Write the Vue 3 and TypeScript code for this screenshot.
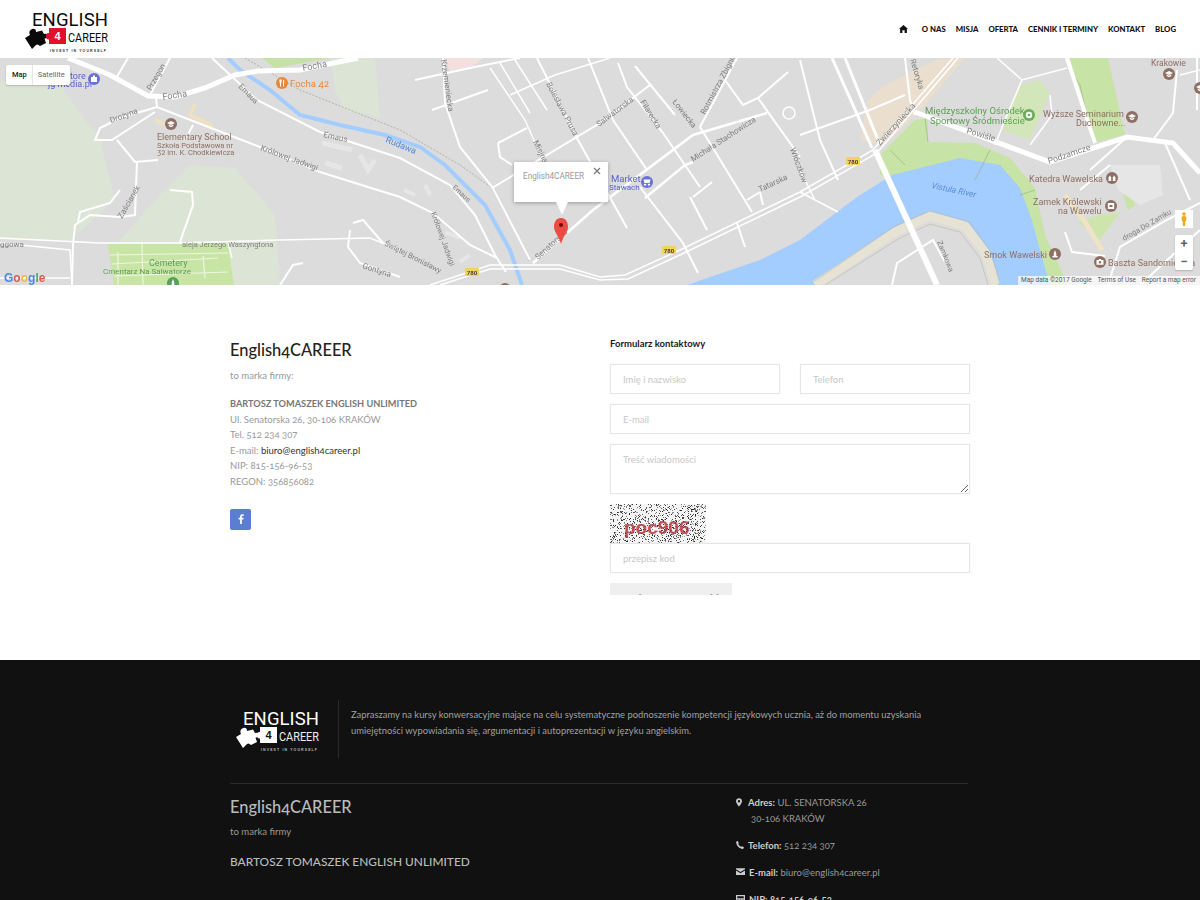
<script setup lang="ts">
interface Road { d: string; w: number }
interface Label { x: number; y: number; t: string; r?: number; c?: string; s?: number; i?: boolean }
interface Poi { x: number; y: number; c: string; g: string }

const G = '#7f7f7f'
const BR = '#8f6f63'
const GR = '#5c9e52'
const BL = '#5b62cf'

const CAP = 'M0,-3 L4,-1 L0,1 L-4,-1 Z M-2.300,0.500 L0,1.800 L2.300,0.500 L2.300,2 L0,3.200 L-2.300,2 Z'
const FORK = 'M-2.600,-3.500 L-2.600,-0.800 L-2,0 L-2,3.500 L-1,3.500 L-1,0 L-0.400,-0.800 L-0.400,-3.500 Z M1,-3.500 C2.600,-3 2.600,-0.500 2,0 L2,3.500 L1,3.500 Z'
const CART = 'M-3.500,-2.500 L3.500,-2.500 L2.500,1 L-2.500,1 Z M-2,1.800 A0.900,0.900 0 1 1 -2,3.500 A0.900,0.900 0 1 1 -2,1.800 Z M2,1.800 A0.900,0.900 0 1 1 2,3.500 A0.900,0.900 0 1 1 2,1.800 Z'
const BAG = 'M-3,-2 L3,-2 L3,3 L-3,3 Z M-1,-3.500 L1,-3.500 L1,-2 L-1,-2 Z'
const RING = 'M0,-3.200 A3.200,3.200 0 1 1 0,3.200 A3.200,3.200 0 1 1 0,-3.200 Z M0,-1.300 A1.300,1.300 0 1 0 0,1.300 A1.300,1.300 0 1 0 0,-1.300 Z'
const CHURCH = 'M-3.500,3 L-3.500,-0.500 L-2,-2.500 L-0.800,-0.500 L-0.800,3 Z M0.800,3 L0.800,-0.500 L2,-2.500 L3.500,-0.500 L3.500,3 Z'
const MUSEUM = 'M-3.200,-3 L3.200,-3 L3.200,3 L-3.200,3 Z M-1.500,-1 L-1.500,1 L1.500,1 L1.500,-1 Z'
const STATUE = 'M0,-4 L1.300,-0.500 L1.300,2 L2.600,2 L2.600,3.500 L-2.600,3.500 L-2.600,2 L-1.300,2 L-1.300,-0.500 Z'
const CAMERA = 'M-3.500,-2 L-1.500,-2 L-0.800,-3 L0.800,-3 L1.500,-2 L3.500,-2 L3.500,2.800 L-3.500,2.800 Z M0,-1 A1.300,1.300 0 1 0 0,1.600 A1.300,1.300 0 1 0 0,-1 Z'

const PUZZLE = 'M1,33 L6,30 Q4,26 8,24 Q12,23 12,27 L18,25.500 L20,29 Q23,28 23.500,31 Q23,34 20.500,33.500 L22,38 L16,41 Q13,38 11,41 L8,44 Z'
const BOX = 'M25,23 L42,23 L42,39 L25,39 L25,34.500 Q22,35 22,31 Q22,27.500 25,28 Z'

const roads: Road[] = [
  { d: 'M68,58 L110,75 L148,96 L175,97 L205,88 L235,75 L258,71 L300,70 L358,58', w: 5 },
  { d: 'M915,112 L1050,162 L1127,137 L1173,143 L1200,173', w: 5 },
  { d: 'M1067,58 L1095,143', w: 4 },
  { d: 'M157,107 L260,147 L320,172 L400,197 L433,213 L470,245 L497,258', w: 2 },
  { d: 'M212,58 L257,100 L320,132 L400,158 L450,185 L475,215 L495,255 L506,272', w: 2 },
  { d: 'M157,107 L120,118 L100,128 L95,140 L112,140 L155,112', w: 2 },
  { d: 'M157,107 L156,98 M150,95 L170,58 M115,80 L128,58', w: 2 },
  { d: 'M117,140 L135,162 L158,160 M137,162 L135,215 L120,217 L90,215 L75,225 L73,245 L72,285', w: 2 },
  { d: 'M78,222 L80,212 L110,203 L120,190 M170,190 L192,192 L193,205 L180,242', w: 2 },
  { d: 'M0,238 L100,243 L180,243 L280,240 L370,238 L400,250', w: 1.5 },
  { d: 'M0,243 L70,250 L72,285 M228,242 L232,258 M0,278 L70,278', w: 1.5 },
  { d: 'M353,223 L363,220 L383,243 M350,230 L348,247 L360,263 L400,277 M280,285 L293,265 L303,263', w: 2 },
  { d: 'M193,125 L185,140 M415,80 L470,68 L520,58 M432,110 L488,90', w: 2 },
  { d: 'M443,58 L445,103 L460,147 L493,188 L530,260', w: 2 },
  { d: 'M490,68 L525,120 L545,165 M500,63 L530,113 M515,60 L547,110 M510,95 L555,75 L610,58', w: 1.5 },
  { d: 'M537,58 L578,140 L627,228 M492,188 L600,123 L650,85 M498,143 L527,128 M498,143 L500,157 L512,165', w: 2 },
  { d: 'M588,58 L613,120 L647,170 M618,63 L627,87 L663,133 L700,187 M635,66 L675,115', w: 2 },
  { d: 'M533,263 L593,210 L693,135 L767,113 M645,198 L685,165 L693,162', w: 2.5 },
  { d: 'M700,127 L752,212 M693,197 L712,182 M690,197 L707,230 M640,187 L683,243 L698,273', w: 2 },
  { d: 'M700,127 L737,58 M725,80 L743,105 L758,98 L788,72 M758,98 L800,157', w: 2 },
  { d: 'M747,200 L760,192 M737,223 L745,247 M760,192 L763,205', w: 2 },
  { d: 'M800,60 L820,140 L838,180 M800,135 L870,110 L905,95 M905,58 L910,100 L915,115', w: 2 },
  { d: 'M997,58 L1022,80 L1067,68 M1022,80 L1005,120 L995,145 M1050,95 L1052,115 L1030,145', w: 1.5 },
  { d: 'M1177,70 L1173,113 L1153,140 M1127,137 L1090,170 M1197,58 L1197,110', w: 2 },
  { d: 'M1108,285 L1120,247 L1167,220 L1200,203 M1140,285 L1200,230 M892,285 L897,263 L933,240 L945,262', w: 2 },
  { d: 'M1065,232 L1072,252 L1105,256 M1165,143 L1190,200 M1080,190 L1110,165', w: 2 },
  { d: 'M800,192 L838,212 M800,170 L815,200 M1200,70 L1180,75', w: 1.5 },
  { d: 'M430,285 L490,265 L560,265 L600,277 L625,275 L680,250 L800,192 L873,150 L953,58', w: 1.5 },
  { d: 'M440,285 L490,269 L560,269 L600,280 L628,279 L682,254 L802,196 L877,153 L958,58', w: 1.5 },
  { d: 'M832,58 L872,148 M845,58 L880,145', w: 3 },
  { d: 'M875,150 L937,285', w: 6 }
]

const labels: Label[] = [
  { x: 163, y: 100, t: 'Focha', r: -9 }, { x: 303, y: 71, t: 'Focha', r: -10 },
  { x: 151, y: 91, t: 'Przegon', r: -60, s: 8 }, { x: 111, y: 123, t: 'Drożyna', r: -20, s: 8 },
  { x: 238, y: 87, t: 'Emaus', r: 45, s: 8 }, { x: 323, y: 137, t: 'Emaus', r: 12, s: 8 },
  { x: 385, y: 142, t: 'Rudawa', r: 22, c: '#4f86d6', s: 9 },
  { x: 260, y: 150, t: 'Królowej Jadwigi', r: 20, s: 8 }, { x: 122, y: 219, t: 'Zaścianek', r: -60, s: 8 },
  { x: 182, y: 247, t: 'aleja Jerzego Waszyngtona', s: 7.5 }, { x: 0, y: 247, t: 'ggowa', s: 8 },
  { x: 384, y: 245, t: 'Świętej Bronisławy', r: 27, s: 7.5 }, { x: 362, y: 268, t: 'Gontyna', r: 18, s: 8 },
  { x: 157, y: 140, t: 'Elementary School', c: BR, s: 9 },
  { x: 157, y: 148, t: 'Szkoła Podstawowa nr', c: BR, s: 7.5 }, { x: 157, y: 155, t: '32 im. K. Chodkiewicza', c: BR, s: 7.5 },
  { x: 290, y: 87, t: 'Focha 42', c: '#e5893c', s: 9.5 }, { x: 70, y: 79, t: 'tore', c: BL, s: 9 }, { x: 48, y: 87, t: 'jg media.pl', c: BL, s: 9 },
  { x: 149, y: 266, t: 'Cemetery', c: GR, s: 9 }, { x: 103, y: 274, t: 'Cmentarz Na Salwatorze', c: GR, s: 8 },
  { x: 441, y: 60, t: 'Krzemieniecka', r: 82, s: 8 },
  { x: 546, y: 84, t: 'Bolesława Prusa', r: 62, s: 8 }, { x: 599, y: 127, t: 'Salwatorska', r: -37, s: 8 },
  { x: 640, y: 102, t: 'Filarecka', r: 58, s: 8 }, { x: 672, y: 102, t: 'Łowiecka', r: 52, s: 8 },
  { x: 705, y: 115, t: 'Rotmistrza Zbigniewa', r: -62, s: 8 }, { x: 693, y: 162, t: 'Michała Stachowicza', r: -33, s: 8 },
  { x: 790, y: 149, t: 'Włóczków', r: 70, s: 8 }, { x: 760, y: 192, t: 'Tatarska', r: -25, s: 8 },
  { x: 533, y: 142, t: 'Misjna', r: 64, s: 8 }, { x: 538, y: 260, t: 'Senatorska', r: -42, s: 8 },
  { x: 452, y: 188, t: 'Emaus', r: 42, s: 7 }, { x: 431, y: 213, t: 'Królowej Jadwigi', r: 70, s: 7.5 },
  { x: 611, y: 182, t: 'Market', c: BL, s: 9.5 }, { x: 609, y: 190, t: 'Stawach', c: BL, s: 8 },
  { x: 880, y: 146, t: 'Zwierzyniecka', r: -48, s: 8.5 }, { x: 910, y: 60, t: 'Retoryka', r: 73, s: 8 },
  { x: 966, y: 133, t: 'Powiśle', r: 17, s: 8.5 }, { x: 1049, y: 164, t: 'Podzamcze', r: -19, s: 8.5 },
  { x: 925, y: 114, t: 'Międzyszkolny Ośrodek', c: GR, s: 9.5 }, { x: 930, y: 124, t: 'Sportowy Śródmieście', c: GR, s: 9.5 },
  { x: 1043, y: 117, t: 'Wyższe Seminarium', c: BR, s: 9 }, { x: 1076, y: 126, t: 'Duchowne...', c: BR, s: 9 },
  { x: 1029, y: 182, t: 'Katedra Wawelska', c: BR, s: 9 }, { x: 1033, y: 205, t: 'Zamek Królewski', c: BR, s: 9 },
  { x: 1058, y: 214, t: 'na Wawelu', c: BR, s: 9 }, { x: 984, y: 258, t: 'Smok Wawelski', c: BR, s: 9 },
  { x: 1108, y: 266, t: 'Baszta Sandomierska', c: BR, s: 9 }, { x: 1151, y: 66, t: 'Krakowie', c: BR, s: 8.5 },
  { x: 931, y: 188, t: 'Vistula River', r: 12, c: '#5f8fd6', s: 8.5, i: true },
  { x: 937, y: 242, t: 'Zamkowa', r: 68, s: 7.5 }, { x: 1124, y: 241, t: 'droga Do Zamku', r: -30, s: 7.5 }
]

const pois: Poi[] = [
  { x: 171, y: 124, c: BR, g: CAP }, { x: 282, y: 83, c: '#e8873a', g: FORK }, { x: 94, y: 79, c: '#6a70d8', g: BAG },
  { x: 173, y: 283, c: '#57a05a', g: STATUE }, { x: 647, y: 182, c: '#6a70d8', g: CART }, { x: 505, y: 289, c: BR, g: CAP },
  { x: 1029, y: 115, c: '#6cab5c', g: RING }, { x: 1132, y: 117, c: BR, g: CAP }, { x: 1112, y: 178, c: BR, g: CHURCH },
  { x: 1111, y: 206, c: BR, g: MUSEUM }, { x: 1055, y: 254, c: BR, g: STATUE }, { x: 1100, y: 262, c: BR, g: CAMERA },
  { x: 1169, y: 74, c: BR, g: CAP }, { x: 1200, y: 88, c: BR, g: CAP }
]

const badges = [{ x: 669, y: 250 }, { x: 472, y: 272 }, { x: 853, y: 161 }]

let seed = 7
const rnd = (): number => {
  seed = (seed * 16807) % 2147483647
  return seed / 2147483647
}
const noise = Array.from({ length: 900 }, () => ({
  x: Math.floor(rnd() * 96),
  y: Math.floor(rnd() * 39),
  o: 0.35 + rnd() * 0.65
}))
</script>

<template>
  <div class="page">
    <header class="top">
      <svg class="logo" viewBox="0 0 90 48" width="90" height="48">
        <path :d="PUZZLE" fill="#0a0a0a" />
        <path :d="BOX" fill="#e0112b" />
        <text class="l-four" x="33.500" y="35" fill="#fff">4</text>
        <text class="l-main" x="8" y="21" textLength="76" fill="#0a0a0a">ENGLISH</text>
        <text class="l-sub" x="44" y="36.500" textLength="40" lengthAdjust="spacingAndGlyphs" fill="#0a0a0a">CAREER</text>
        <text class="l-tag" x="26" y="47" textLength="56" fill="#333">INVEST IN YOURSELF</text>
      </svg>
      <nav class="nav">
        <svg class="home" viewBox="0 0 16 14" width="9" height="8"><path d="M8,0 L16,7 L14,7 L14,14 L10,14 L10,9 L6,9 L6,14 L2,14 L2,7 L0,7 Z" fill="#111" /></svg>
        <a>O NAS</a><a>MISJA</a><a>OFERTA</a><a>CENNIK I TERMINY</a><a>KONTAKT</a><a>BLOG</a>
      </nav>
    </header>

    <section class="map">
      <svg class="map-svg" viewBox="0 58 1200 227" width="1200" height="227">
        <rect x="0" y="58" width="1200" height="227" fill="#dcdcdc" />
        <path d="M0,82 L60,85 L100,140 L115,200 L70,240 L0,240 Z" fill="#dce5d5" />
        <path d="M120,240 L160,195 L190,165 L235,168 L275,215 L280,285 L120,285 Z" fill="#dce5d5" />
        <path d="M330,58 L375,58 L380,118 L345,110 L335,90 Z" fill="#dce5d5" />
        <path d="M262,58 L330,58 L275,68 Z" fill="#c5e1a5" />
        <path d="M108,244 L228,244 L234,285 L114,285 Z" fill="#c9e5a6" />
        <path d="M860,140 L868,100 L885,85 L935,60 L965,58 L925,105 L885,145 Z" fill="#eadfcf" />
        <path d="M445,58 L484,58 L470,68 L450,72 Z" fill="#f3dfe0" />
        <path d="M1070,58 L1108,58 L1125,135 L1093,143 Z" fill="#c8e3a6" />
        <path d="M1003,130 L1020,85 L1040,80 L1050,93 L1030,140 Z" fill="#d3e6b9" />
        <path d="M1078,222 L1100,215 L1120,212 L1100,240 Z" fill="#cde5ac" />
        <path d="M1123,195 L1131,192 L1135,206 L1128,210 Z" fill="#c8e3a6" />
        <path d="M1110,165 L1160,165 L1163,195 L1140,205 L1118,190 Z" fill="#e6e6e6" />
        <path d="M880,155 L915,120 L928,118 L928,142 L975,143 L1010,158 L1035,188 L1045,235 L1068,285 L1045,285 L960,190 L880,175 Z" fill="#c8e3a6" />
        <path d="M800,240 L857,197 L892,175 L960,158 L1000,165 L1020,188 L1032,220 L1040,250 L1050,285 L998,285 L985,250 L965,225 L925,215 L895,230 L840,268 L815,285 L687,285 L760,260 Z" fill="#a3ccff" />
        <path d="M815,285 L895,232 L930,216 L965,226 L985,252 L996,285" fill="none" stroke="#e6e3d4" stroke-width="9" />
        <path d="M812,283 L895,226 L930,211 L970,222 L992,254 L1000,285 M825,285 L900,238 L930,224 L960,232 L980,258 L988,285" fill="none" stroke="#bcb6a8" stroke-width="0.600" />
        <path d="M925,118 L928,142 M890,150 L905,165 M990,150 L975,180 M1035,190 L1020,195 M1093,143 L1080,85 L1070,70" fill="none" stroke="#8fb07a" stroke-width="0.600" />
        <path d="M228,58 L240,70 L270,90 L300,115 L340,125 L385,135 L420,147 L445,165 L485,205 L510,250 L522,285" fill="none" stroke="#a3ccff" stroke-width="4" />
        <path d="M245,58 L300,90 L400,130 L460,165 L495,190 L520,240 L530,262" fill="none" stroke="#b8b09c" stroke-width="1" stroke-dasharray="2 1.500" />
        <path d="M195,104 L190,115 L213,126 M155,120 L168,126" fill="none" stroke="#eee0c0" stroke-width="4" />
        <path d="M322,143 L352,150 M325,163 L342,168 M360,155 L368,170 L375,160" fill="none" stroke="#e6e6e6" stroke-width="5" />
        <path d="M404,190 L415,195 M425,185 L430,195 M445,232 L460,238 M460,262 L470,255" fill="none" stroke="#e6e6e6" stroke-width="4" />
        <path d="M110,255 L228,253 M112,264 L218,258 M114,276 L228,272 M142,244 L143,285 M203,256 L205,278 M118,252 L118,285" fill="none" stroke="#eef5e2" stroke-width="1.200" />
        <path d="M1065,195 L1085,222 L1102,250" fill="none" stroke="#efe3c5" stroke-width="5" />
        <path v-for="(r, i) in roads" :key="'r' + i" :d="r.d" fill="none" stroke="#fff" :stroke-width="r.w" />
        <circle cx="789" cy="113" r="6" fill="none" stroke="#fff" stroke-width="1.500" />
        <g v-for="(b, i) in badges" :key="'b' + i">
          <rect :x="b.x - 7" :y="b.y - 4" width="14" height="8" rx="1" fill="#f3d35c" />
          <text class="badge" :x="b.x" :y="b.y + 2.500" text-anchor="middle">780</text>
        </g>
        <text v-for="(l, i) in labels" :key="'l' + i" class="lbl" :class="{ it: l.i }" :x="l.x" :y="l.y" :font-size="l.s ?? 9" :fill="l.c ?? G" :transform="l.r ? `rotate(${l.r} ${l.x} ${l.y})` : undefined">{{ l.t }}</text>
        <g v-for="(p, i) in pois" :key="'p' + i" :transform="`translate(${p.x} ${p.y})`">
          <circle r="6" :fill="p.c" />
          <path :d="p.g" fill="#fff" fill-rule="evenodd" />
        </g>
        <text class="goog" x="4" y="282"><tspan fill="#4d86e8">G</tspan><tspan fill="#e0594b">o</tspan><tspan fill="#f0b93a">o</tspan><tspan fill="#4d86e8">g</tspan><tspan fill="#4cab5c">l</tspan><tspan fill="#e0594b">e</tspan></text>
        <path d="M561,218 C555,218 554,224 554,227 C554,232 559,236 561,244 C563,236 568,232 568,227 C568,224 567,218 561,218 Z" fill="#ea4c43" />
        <circle cx="561" cy="225" r="2" fill="#6b0d0b" />
      </svg>

      <div class="maptype"><b>Map</b><span>Satellite</span></div>

      <div class="bubble">
        <span>English4CAREER</span>
        <svg class="x" viewBox="0 0 8 8" width="8" height="8"><path d="M1,1 L7,7 M7,1 L1,7" stroke="#777" stroke-width="1.200" /></svg>
        <i class="tail"></i>
      </div>

      <div class="peg">
        <svg viewBox="0 0 10 20" width="8" height="14"><circle cx="5" cy="3" r="2.600" fill="#f0a81c" /><path d="M1.500,7 Q5,4.500 8.500,7 L8,13 L7,13 L6.500,20 L3.500,20 L3,13 L2,13 Z" fill="#f0a81c" /></svg>
      </div>
      <div class="zoom"><span>+</span><span>−</span></div>
      <div class="attrib"><span>Map data ©2017 Google</span><span>Terms of Use</span><span>Report a map error</span></div>
    </section>

    <main class="contact">
      <div class="info">
        <h3>English4CAREER</h3>
        <p class="lead">to marka firmy:</p>
        <p class="lines">
          <strong>BARTOSZ TOMASZEK ENGLISH UNLIMITED</strong><br />
          Ul. Senatorska 26, 30-106 KRAKÓW<br />
          Tel. 512 234 307<br />
          E-mail: <a>biuro@english4career.pl</a><br />
          NIP: 815-156-96-53<br />
          REGON: 356856082
        </p>
        <div class="fb">
          <svg viewBox="0 0 10 18" width="6" height="10"><path d="M6.500,18 L6.500,10 L9.200,10 L9.600,6.900 L6.500,6.900 L6.500,4.900 C6.500,4 6.800,3.400 8.100,3.400 L9.700,3.400 L9.700,0.600 C9.400,0.600 8.500,0.500 7.400,0.500 C5,0.500 3.400,1.900 3.400,4.600 L3.400,6.900 L0.700,6.900 L0.700,10 L3.400,10 L3.400,18 Z" fill="#fff" /></svg>
        </div>
      </div>
      <form class="form">
        <h4>Formularz kontaktowy</h4>
        <div class="two">
          <input placeholder="Imię i nazwisko" />
          <input placeholder="Telefon" />
        </div>
        <input placeholder="E-mail" />
        <textarea placeholder="Treść wiadomości"></textarea>
        <div class="captcha-block">
          <svg class="captcha" viewBox="0 0 96 39" width="96" height="39">
            <rect width="96" height="39" fill="#f4f4f4" />
            <rect v-for="(n, i) in noise" :key="i" :x="n.x" :y="n.y" width="1" height="1" fill="#222" :opacity="n.o" />
            <text x="14" y="30" class="cap-text">poc906</text>
          </svg>
          <input class="code" placeholder="przepisz kod" />
        </div>
        <div class="btn-clip"><button type="button">WYŚLIJ WIADOMOŚĆ</button></div>
      </form>
    </main>

    <footer class="foot">
      <div class="foot-inner">
        <div class="foot-top">
          <svg class="logo" viewBox="0 0 90 48" width="90" height="48">
            <path :d="PUZZLE" fill="#fff" />
            <path :d="BOX" fill="#fff" />
            <text class="l-four" x="33.500" y="35" fill="#111">4</text>
            <text class="l-main" x="8" y="21" textLength="76" fill="#fff">ENGLISH</text>
            <text class="l-sub" x="44" y="36.500" textLength="40" lengthAdjust="spacingAndGlyphs" fill="#eee">CAREER</text>
            <text class="l-tag" x="26" y="47" textLength="56" fill="#bbb">INVEST IN YOURSELF</text>
          </svg>
          <p>Zapraszamy na kursy konwersacyjne mające na celu systematyczne podnoszenie kompetencji językowych ucznia, aż do momentu uzyskania<br />umiejętności wypowiadania się, argumentacji i autoprezentacji w języku angielskim.</p>
        </div>
        <div class="foot-bottom">
          <div class="foot-left">
            <h3>English4CAREER</h3>
            <p class="lead">to marka firmy</p>
            <p class="company">BARTOSZ TOMASZEK ENGLISH UNLIMITED</p>
          </div>
          <ul class="foot-right">
            <li>
              <svg viewBox="0 0 10 14" width="6" height="9"><path fill-rule="evenodd" d="M5,0 C2,0 0,2.200 0,5 C0,8 5,14 5,14 C5,14 10,8 10,5 C10,2.200 8,0 5,0 Z M5,3 A2,2 0 1 1 5,7 A2,2 0 1 1 5,3 Z" fill="#ccc" /></svg>
              <span class="g6"><b>Adres:</b> UL. SENATORSKA 26<br /><em>30-106 KRAKÓW</em></span>
            </li>
            <li>
              <svg viewBox="0 0 14 14" width="8" height="8"><path d="M3,0 L5,3.500 L3.800,5 C4.500,7 6.500,9.300 9,10.200 L10.500,9 L14,11 L12.500,13.800 C7,14.500 0,8 0.200,1.500 Z" fill="#ccc" /></svg>
              <span class="g3"><b>Telefon:</b> 512 234 307</span>
            </li>
            <li>
              <svg viewBox="0 0 16 12" width="9" height="7"><path d="M0,0 L16,0 L16,2 L8,7 L0,2 Z M0,4 L8,9 L16,4 L16,12 L0,12 Z" fill="#ccc" /></svg>
              <span class="g4"><b>E-mail:</b> biuro@english4career.pl</span>
            </li>
            <li>
              <svg viewBox="0 0 14 14" width="9" height="9"><path fill-rule="evenodd" d="M0,0 L14,0 L14,14 L0,14 Z M2,2 L2,5 L12,5 L12,2 Z M2,7 L2,9 L4,9 L4,7 Z M6,7 L6,9 L8,9 L8,7 Z M10,7 L10,9 L12,9 L12,7 Z" fill="#ccc" /></svg>
              <span class="g4"><b>NIP:</b> <b>815-156-96-53</b></span>
            </li>
          </ul>
        </div>
      </div>
    </footer>
  </div>
</template>

<style scoped>
.page {
  width: 1200px;
  height: 900px;
  overflow: hidden;
  background: #fff;
  font-family: Lato, "Open Sans", sans-serif;
  font-variant-numeric: oldstyle-nums;
  color: #999;
}
.top {
  height: 58px;
  display: flex;
  align-items: center;
  justify-content: space-between;
  padding: 0 24px;
  box-sizing: border-box;
}
.logo { display: block; flex: none; }
.l-main { font: 400 18.500px "Liberation Sans Narrow", Roboto, sans-serif; }
.l-sub { font: 400 13.500px "Liberation Sans Narrow", Roboto, sans-serif; }
.l-four { font: 700 11px "Liberation Sans", sans-serif; text-anchor: middle; }
.l-tag { font: 700 3.500px "Liberation Sans", sans-serif; }
.nav {
  display: flex;
  align-items: center;
  gap: 10px;
  font-size: 7.750px;
  font-weight: 900;
  color: #111;
  margin-top: -1px;
}
.home { margin-right: 4px; }
.map { position: relative; height: 227px; overflow: hidden; }
.map-svg { display: block; filter: blur(0.3px); }
.lbl { font-family: Roboto, sans-serif; }
.it { font-style: italic; }
.badge { font: 700 6px Roboto, sans-serif; fill: #444; }
.goog { font: 700 12px "Liberation Sans", sans-serif; }
.maptype {
  position: absolute;
  left: 6px;
  top: 7px;
  height: 20px;
  display: flex;
  align-items: center;
  background: #fff;
  border-radius: 2px;
  box-shadow: 0 1px 2px rgba(0, 0, 0, 0.2);
  font: 7.500px/20px Roboto, sans-serif;
}
.maptype b { padding: 0 5px 0 6px; color: #222; font-weight: 500; border-right: 1px solid #e6e6e6; }
.maptype span { padding: 0 5px; color: #666; }
.bubble {
  position: absolute;
  left: 514px;
  top: 104px;
  width: 94px;
  height: 40px;
  box-sizing: border-box;
  padding: 9px 9px;
  background: #fff;
  box-shadow: 0 1px 4px rgba(0, 0, 0, 0.3);
  font: 8.200px/10px Roboto, sans-serif;
  color: #999;
}
.x { position: absolute; right: 7px; top: 5px; }
.tail {
  position: absolute;
  left: 42px;
  top: 40px;
  border-left: 6px solid transparent;
  border-right: 6px solid transparent;
  border-top: 13px solid #fff;
}
.peg {
  position: absolute;
  left: 1175px;
  top: 152px;
  width: 18px;
  height: 18px;
  background: #fff;
  display: flex;
  align-items: center;
  justify-content: center;
}
.zoom {
  position: absolute;
  left: 1175px;
  top: 177px;
  width: 18px;
  height: 35px;
  background: #fff;
  border-radius: 2px;
  box-shadow: 0 1px 2px rgba(0, 0, 0, 0.2);
  display: flex;
  flex-direction: column;
  font: 700 13px/17.500px Roboto, sans-serif;
  color: #666;
  text-align: center;
}
.attrib {
  position: absolute;
  right: 0;
  bottom: 0;
  width: 182px;
  height: 9px;
  box-sizing: border-box;
  padding: 0 4px 0 3px;
  background: rgba(255, 255, 255, 0.7);
  display: flex;
  justify-content: space-between;
  font: 6.500px/9px Roboto, sans-serif;
  color: #555;
}
.contact {
  width: 740px;
  height: 375px;
  margin: 0 auto;
  display: grid;
  grid-template-columns: 380px 360px;
  box-sizing: border-box;
  padding-top: 50px;
  font-size: 10px;
}
h3 {
  margin: 0;
  font-size: 16.400px;
  line-height: 28px;
  font-weight: 500;
  color: #222;
}
.info { padding-top: 1px; }
.lead { margin: 4px 0 0; font-size: 9.600px; line-height: 16px; }
.lines { margin: 12px 0 0; line-height: 15.600px; font-size: 9.500px; }
.lines strong { color: #777; font-weight: 700; font-size: 9.200px; }
.lines a { color: #333; }
.fb {
  margin-top: 19px;
  width: 21px;
  height: 21px;
  border-radius: 2px;
  background: #5a7fd1;
  display: flex;
  align-items: center;
  justify-content: center;
}
.form { display: flex; flex-direction: column; gap: 10px; height: 310px; }
.form h4 { margin: 3px 0 4px; font-size: 9.500px; line-height: 12px; font-weight: 700; color: #1a1a1a; }
.two { display: flex; gap: 20px; }
.two input { flex: 1; min-width: 0; }
input, textarea {
  display: block;
  box-sizing: border-box;
  height: 30px;
  width: 100%;
  border: 1px solid #e6e6e6;
  box-shadow: 0 0 1px #eee;
  padding: 0 12px;
  font: 9.500px Lato, sans-serif;
  background: #fff;
  outline: none;
  border-radius: 0;
}
textarea { height: 50px; padding: 9px 12px; }
input::placeholder, textarea::placeholder { color: #c8c8c8; opacity: 1; }
.captcha-block { display: flex; flex-direction: column; align-items: flex-start; }
.captcha { display: block; }
.cap-text { font: 700 19px "Liberation Sans", sans-serif; fill: #b9343f; fill-opacity: 0.85; }
.btn-clip { height: 12px; overflow: hidden; }
button {
  width: 122px;
  height: 30px;
  border: 0;
  background: #efefef;
  font: 700 8px/12px Lato, sans-serif;
  letter-spacing: 1px;
  color: #666;
  padding: 0;
}
.foot { background: #111; height: 240px; color: #999; }
.foot-inner { width: 738px; margin-left: 230px; }
.foot-top {
  height: 124px;
  display: flex;
  align-items: flex-start;
  border-bottom: 1px solid #2c2c2c;
  box-sizing: border-box;
  padding-top: 40px;
}
.foot-top .logo { margin: 4px 0 0 5px; }
.foot-top p {
  margin: 0 0 0 13px;
  height: 58px;
  padding: 7px 0 0 12px;
  box-sizing: border-box;
  border-left: 1px solid #2a2a2a;
  white-space: nowrap;
  font-size: 9.400px;
  line-height: 15.500px;
  color: #a0a0a0;
}
.foot-bottom { display: flex; justify-content: space-between; }
.foot-left h3 { color: #bbb; margin-top: 9px; }
.foot-left .lead { margin-top: 3px; }
.company { margin: 14px 0 0; font-size: 11.900px; line-height: 16px; font-weight: 500; color: #bbb; }
.foot-right {
  list-style: none;
  margin: 0;
  padding: 11px 0 0;
  width: 232px;
  font-size: 9.500px;
  line-height: 15.500px;
}
.foot-right li { display: flex; align-items: flex-start; margin-bottom: 11.500px; }
.foot-right svg { flex: none; margin-top: 3px; }
.g6 { margin-left: 6px; }
.g3 { margin-left: 4px; }
.g4 { margin-left: 4px; }
.foot-right b { color: #ccc; font-weight: 700; }
.foot-right em { font-style: normal; margin-left: 3px; }
</style>
